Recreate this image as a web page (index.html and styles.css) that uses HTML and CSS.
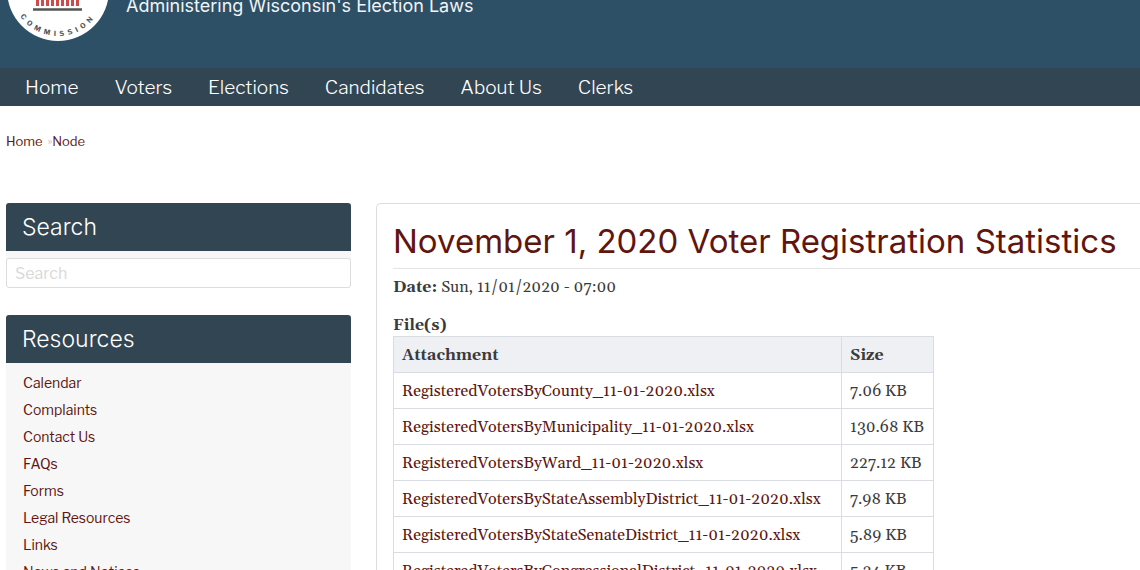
FILE: index.html
```html
<!DOCTYPE html>
<html lang="en">
<head>
  <meta charset="UTF-8">
  <meta name="viewport" content="width=device-width, initial-scale=1.0">
  <title>November 1, 2020 Voter Registration Statistics</title>
  <link rel="stylesheet" href="styles.css">
</head>
<body>
  <header class="site-header">
    <div class="brand">
      <svg class="logo" viewBox="0 0 102 102" role="img" aria-label="Commission seal">
        <circle cx="51" cy="51" r="51" fill="#fff"/>
        <path d="M30.500 32V67M35.500 32V67M40.500 32V67M45.500 32V67M50.500 32V67M55.500 32V67M60.500 32V67M65.500 32V67M70.500 32V67" stroke="#d04a4a" stroke-width="3"/>
        <path d="M26 70.500H75" stroke="#555" stroke-width="2.500"/>
        <path d="M5 59L7 61M97 59L95 61" stroke="#777" stroke-width="1"/>
        <path id="sealArc" d="M5 51A46 46 0 0 0 97 51" fill="none"/>
        <text class="seal-text" text-anchor="middle"><textPath href="#sealArc" startOffset="50%">COMMISSION</textPath></text>
      </svg>
      <div class="slogan">Administering Wisconsin's Election Laws</div>
    </div>
  </header>

  <nav class="main-nav">
    <a href="#">Home</a>
    <a href="#">Voters</a>
    <a href="#">Elections</a>
    <a href="#">Candidates</a>
    <a href="#">About Us</a>
    <a href="#">Clerks</a>
  </nav>

  <div class="breadcrumb">
    <a href="#">Home</a><span>»</span><a href="#">Node</a>
  </div>

  <div class="container">
    <aside class="sidebar">
      <section class="block search-block">
        <h2><label for="search">Search</label></h2>
        <input type="text" id="search" placeholder="Search">
      </section>
      <section class="block">
        <h2>Resources</h2>
        <ul class="menu">
          <li><a href="#">Calendar</a></li>
          <li><a href="#">Complaints</a></li>
          <li><a href="#">Contact Us</a></li>
          <li><a href="#">FAQs</a></li>
          <li><a href="#">Forms</a></li>
          <li><a href="#">Legal Resources</a></li>
          <li><a href="#">Links</a></li>
          <li><a href="#">News and Notices</a></li>
        </ul>
      </section>
    </aside>

    <main class="content">
      <h1>November 1, 2020 Voter Registration Statistics</h1>
      <p class="date"><b>Date:</b> Sun, 11/01/2020 - 07:00</p>
      <p class="label"><b>File(s)</b></p>
      <table>
        <thead>
          <tr><th class="file">Attachment</th><th class="size">Size</th></tr>
        </thead>
        <tbody>
          <tr><td><a href="#">RegisteredVotersByCounty_11-01-2020.xlsx</a></td><td>7.06 KB</td></tr>
          <tr><td><a href="#">RegisteredVotersByMunicipality_11-01-2020.xlsx</a></td><td>130.68 KB</td></tr>
          <tr><td><a href="#">RegisteredVotersByWard_11-01-2020.xlsx</a></td><td>227.12 KB</td></tr>
          <tr><td><a href="#">RegisteredVotersByStateAssemblyDistrict_11-01-2020.xlsx</a></td><td>7.98 KB</td></tr>
          <tr><td><a href="#">RegisteredVotersByStateSenateDistrict_11-01-2020.xlsx</a></td><td>5.89 KB</td></tr>
          <tr><td><a href="#">RegisteredVotersByCongressionalDistrict_11-01-2020.xlsx</a></td><td>5.24 KB</td></tr>
        </tbody>
      </table>
    </main>
  </div>
</body>
</html>
```
FILE: styles.css
```css
:root {
  --header-bg: #2d5066;
  --bar-bg: #324552;
  --link-color: #60150f;
  --line-color: #d9dde1;
}

* {
  box-sizing: border-box;
}

body {
  font-family: "Libre Franklin", Inter, "Liberation Sans", sans-serif;
  margin: 0;
  background-color: #fff;
  color: #3b3b3b;
}

a {
  color: var(--link-color);
  text-decoration: none;
}

.site-header {
  background-color: var(--header-bg);
  padding: 0 7px 27px;
  overflow: hidden;
}

.brand {
  display: flex;
  align-items: flex-end;
  gap: 17px;
  margin-top: -61px;
}

.logo {
  display: block;
  width: 102px;
  height: 102px;
}

.seal-text {
  font-size: 7px;
  font-weight: bold;
  letter-spacing: 4px;
  fill: #555;
}

.slogan {
  color: #f2f4f6;
  font-family: Inter, "Liberation Sans", sans-serif;
  font-size: 18px;
  line-height: 24px;
  padding-bottom: 23px;
}

.main-nav {
  display: flex;
  gap: 36px;
  padding: 2px 25px 0;
  background-color: var(--bar-bg);
}

.main-nav a {
  color: #fff;
  font-size: 19px;
  font-weight: 300;
  line-height: 36px;
}

.breadcrumb {
  display: flex;
  padding: 25px 6px 0;
  font-size: 13px;
  line-height: 20px;
}

.breadcrumb span {
  color: #bbb;
  font-size: 10px;
  padding-left: 5px;
}

.container {
  display: flex;
  gap: 25px;
  padding: 52px 0 0 6px;
}

.sidebar {
  flex: 0 0 345px;
}

.block {
  background-color: #f7f7f7;
  border-radius: 4px;
}

.block h2 {
  margin: 0;
  padding: 0 16px;
  background-color: var(--bar-bg);
  border-radius: 3px 3px 0 0;
  color: #fff;
  font-family: Inter, "Liberation Sans", sans-serif;
  font-size: 23px;
  font-weight: 300;
  line-height: 48px;
}

.search-block {
  margin-bottom: 27px;
}

.search-block input {
  display: block;
  width: 100%;
  height: 30px;
  margin-top: 7px;
  padding: 0 8px;
  border: 1px solid #ddd;
  border-radius: 3px;
  background-color: #fff;
  font-family: inherit;
  font-size: 16px;
}

.search-block input::placeholder {
  color: #d9d9d9;
}

.menu {
  list-style: none;
  margin: 0;
  padding: 6px 17px;
  font-size: 14px;
  line-height: 27px;
}

.content {
  flex: 1;
  min-width: 0;
  padding: 15px 0 17px 16px;
  border: 1px solid var(--line-color);
  border-right: none;
  border-radius: 5px 0 0 0;
  font-family: Gelasio, "Liberation Serif", serif;
  font-size: 16px;
}

.content h1 {
  margin: 0;
  padding-bottom: 5px;
  border-bottom: 1px solid #e5e5e5;
  color: var(--link-color);
  font-family: Inter, "Liberation Sans", sans-serif;
  font-size: 33px;
  font-weight: 400;
  line-height: 44px;
  white-space: nowrap;
}

.content p {
  margin: 0;
  line-height: 22px;
}

.content .date {
  margin: 7px 0 16px;
}

table {
  border-collapse: collapse;
}

th, td {
  height: 36px;
  padding: 0 8px;
  border: 1px solid var(--line-color);
  text-align: left;
  white-space: nowrap;
}

th {
  background-color: #eef0f3;
}

.file {
  width: 448px;
}

.size {
  width: 92px;
}
```
